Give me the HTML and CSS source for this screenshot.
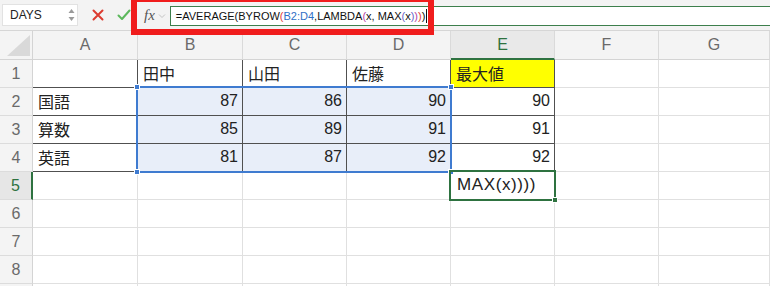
FILE: index.html
```html
<!DOCTYPE html>
<html>
<head>
<meta charset="utf-8">
<link rel="stylesheet" href="styles.css">
</head>
<body>
<div class="app">
  <div class="toolbar">
    <div class="namebox">
      <span class="name">DAYS</span>
      <span class="spin">
        <svg width="7" height="14" viewBox="0 0 7 14"><path d="M0.5 5 L3.5 1 L6.5 5 Z M0.5 9 L3.5 13 L6.5 9 Z" fill="#9a9a9a"/></svg>
      </span>
    </div>
    <div class="btn cancel">
      <svg width="12" height="12" viewBox="0 0 12 12"><path d="M1.5 1.5 L10.5 10.5 M10.5 1.5 L1.5 10.5" stroke="#dc3b30" stroke-width="2" stroke-linecap="round"/></svg>
    </div>
    <div class="btn ok">
      <svg width="14" height="12" viewBox="0 0 14 12"><path d="M1.5 6.5 L5 10 L12.5 1.5" stroke="#5cb85c" stroke-width="2" fill="none" stroke-linecap="round" stroke-linejoin="round"/></svg>
    </div>
    <div class="fx"><i>fx</i><span class="chev">
      <svg width="8" height="6" viewBox="0 0 8 6"><path d="M1 1.5 L4 4.5 L7 1.5" stroke="#c4c4c4" stroke-width="1" fill="none"/></svg>
    </span></div>
    <div class="formula">
      <span>=AVERAGE(BYROW</span><span class="p1">(</span><span class="ref">B2:D4</span><span>,LAMBDA</span><span class="p2">(</span><span>x, MAX</span><span class="p3">(</span><span>x</span><span class="p3">)</span><span class="p2">)</span><span class="p1">)</span><span>)</span><span class="caret"></span>
    </div>
    <div class="callout"></div>
  </div>

  <div class="sheet">
    <div class="corner"><span class="tri"></span></div>
    <div class="colh">A</div>
    <div class="colh">B</div>
    <div class="colh">C</div>
    <div class="colh">D</div>
    <div class="colh on">E</div>
    <div class="colh">F</div>
    <div class="colh">G</div>

    <div class="rowh">1</div>
    <div class="c t"></div>
    <div class="c t">田中</div>
    <div class="c t">山田</div>
    <div class="c t">佐藤</div>
    <div class="c t hi">最大値</div>
    <div class="c"></div><div class="c"></div>

    <div class="rowh">2</div>
    <div class="c t">国語</div>
    <div class="c t n sel">87</div>
    <div class="c t n sel">86</div>
    <div class="c t n sel">90</div>
    <div class="c t n">90</div>
    <div class="c"></div><div class="c"></div>

    <div class="rowh">3</div>
    <div class="c t">算数</div>
    <div class="c t n sel">85</div>
    <div class="c t n sel">89</div>
    <div class="c t n sel">91</div>
    <div class="c t n">91</div>
    <div class="c"></div><div class="c"></div>

    <div class="rowh">4</div>
    <div class="c t">英語</div>
    <div class="c t n sel">81</div>
    <div class="c t n sel">87</div>
    <div class="c t n sel">92</div>
    <div class="c t n">92</div>
    <div class="c"></div><div class="c"></div>

    <div class="rowh on">5</div>
    <div class="c"></div><div class="c"></div><div class="c"></div><div class="c"></div>
    <div class="c edit">MAX(x))))</div>
    <div class="c"></div><div class="c"></div>

    <div class="rowh">6</div>
    <div class="c"></div><div class="c"></div><div class="c"></div><div class="c"></div><div class="c"></div><div class="c"></div><div class="c"></div>
    <div class="rowh">7</div>
    <div class="c"></div><div class="c"></div><div class="c"></div><div class="c"></div><div class="c"></div><div class="c"></div><div class="c"></div>
    <div class="rowh">8</div>
    <div class="c"></div><div class="c"></div><div class="c"></div><div class="c"></div><div class="c"></div><div class="c"></div><div class="c"></div>
    <div class="rowh">9</div>
    <div class="c"></div><div class="c"></div><div class="c"></div><div class="c"></div><div class="c"></div><div class="c"></div><div class="c"></div>

    <div class="range">
      <span class="h tl"></span><span class="h tr"></span><span class="h bl"></span><span class="h br"></span>
    </div>
    <div class="active"><span class="h br"></span></div>
  </div>
</div>
</body>
</html>
```

FILE: styles.css
```css
html, body {
    margin: 0;
    padding: 0;
    width: 100%;
    height: 100%;
    overflow: hidden;
    background: #fff;
    font-family: "Liberation Sans", "Noto Sans CJK JP", sans-serif;
    color: #222;
}

.app {
    width: 770px;
    height: 286px;
    display: flex;
    flex-direction: column;
    overflow: hidden;
}

/* formula bar */

.toolbar {
    position: relative;
    height: 31px;
    flex: none;
    display: flex;
    align-items: center;
    background: #f3f3f3;
    border-bottom: 1px solid #d6d6d6;
    box-sizing: border-box;
}

.namebox {
    width: 76px;
    height: 22px;
    margin-left: 2px;
    background: #fff;
    border: 1px solid #e2e2e2;
    box-sizing: border-box;
    display: flex;
    align-items: center;
    justify-content: space-between;
    padding: 0 2px 0 7px;
    font-size: 12px;
    color: #222;
}

.spin {
    display: flex;
}

.btn {
    display: flex;
    align-items: center;
}

.cancel {
    margin-left: 14px;
}

.ok {
    margin-left: 13px;
}

.fx {
    margin-left: 13px;
    display: flex;
    align-items: center;
    font-family: "Liberation Serif", serif;
    font-size: 15px;
    color: #555;
}

.fx .chev {
    display: flex;
    margin-left: 3px;
    margin-top: 2px;
}

.formula {
    flex: 1;
    height: 20px;
    margin-left: 4px;
    margin-top: 1px;
    background: #fff;
    border: 1px solid #3d7f4c;
    border-right: none;
    box-sizing: border-box;
    display: flex;
    align-items: center;
    padding-left: 5px;
    font-size: 11px;
    white-space: pre;
    color: #111;
}

.formula .p1 { color: #e23a35; }
.formula .ref { color: #2f6fc6; }
.formula .p2 { color: #b545a8; }
.formula .p3 { color: #6a62c8; }

.caret {
    width: 1px;
    height: 14px;
    background: #111;
    margin-left: 1px;
}

.callout {
    position: absolute;
    left: 131px;
    top: -4px;
    width: 303px;
    height: 39px;
    border: 6px solid #f01d1d;
    box-sizing: border-box;
    z-index: 5;
}

/* grid */

.sheet {
    position: relative;
    display: grid;
    grid-template-columns: 33px 105px 105px 104px 104px 104px 104px 1fr;
    grid-template-rows: 29px repeat(9, 28px);
}

.sheet > div {
    box-sizing: border-box;
}

.corner {
    background: #f4f4f4;
    border-right: 1px solid #d4d4d4;
    border-bottom: 1px solid #d4d4d4;
    position: relative;
}

.tri {
    position: absolute;
    right: 2px;
    bottom: 3px;
    width: 0;
    height: 0;
    border-left: 23px solid transparent;
    border-bottom: 21px solid #d9d9d9;
}

.colh {
    background: #f4f4f4;
    border-right: 1px solid #dadada;
    border-bottom: 1px solid #d4d4d4;
    display: flex;
    align-items: center;
    justify-content: center;
    font-size: 16px;
    color: #6a6a6a;
}

.colh.on {
    background: #e9e9e9;
    color: #2e7240;
    border-bottom: 2px solid #2e7240;
}

.rowh {
    background: #f4f4f4;
    border-right: 1px solid #d4d4d4;
    border-bottom: 1px solid #dcdcdc;
    display: flex;
    align-items: center;
    justify-content: center;
    font-size: 16px;
    color: #6a6a6a;
}

.rowh.on {
    background: #e6e6e6;
    color: #2e7240;
    border-right: 2px solid #2e7240;
}

.c {
    border-right: 1px solid #e0e0e0;
    border-bottom: 1px solid #e0e0e0;
    display: flex;
    align-items: center;
    padding: 0 4px 2px 5px;
    font-size: 16px;
    white-space: nowrap;
}

.c.t {
    border-right-color: #505050;
    border-bottom-color: #505050;
}

.c.n {
    justify-content: flex-end;
}

.c.sel {
    background: #e8eef9;
}

.c.hi {
    background: #ffff00;
}

.c.edit {
    font-size: 17px;
    letter-spacing: 0.6px;
    padding-left: 6px;
}

/* selection outlines sit over the cells */

.range {
    position: absolute;
    left: 136px;
    top: 55px;
    width: 316px;
    height: 87px;
    border: 2px solid #3f7bd0;
    z-index: 2;
}

.active {
    position: absolute;
    left: 449px;
    top: 139px;
    width: 107px;
    height: 31px;
    border: 2px solid #2e7240;
    z-index: 3;
}

.h {
    position: absolute;
    width: 6px;
    height: 6px;
    background: #3f7bd0;
    border: 1px solid #fff;
    box-sizing: border-box;
}

.active .h {
    background: #2e7240;
}

.tl { left: -4px; top: -4px; }
.tr { right: -4px; top: -4px; }
.bl { left: -4px; bottom: -4px; }
.br { right: -4px; bottom: -4px; }
```
